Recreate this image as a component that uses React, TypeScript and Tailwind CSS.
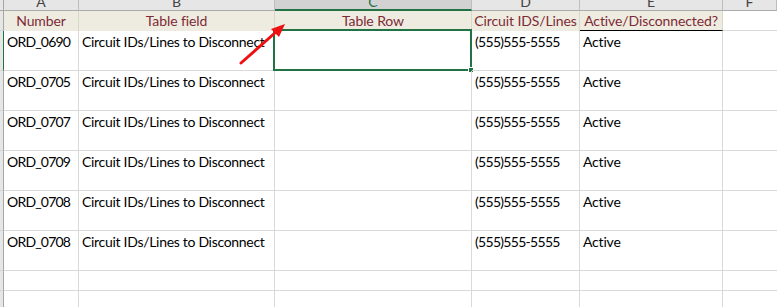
import React from "react";

const rows = [
  ["ORD_0690", "Circuit IDs/Lines to Disconnect", "", "(555)555-5555", "Active"],
  ["ORD_0705", "Circuit IDs/Lines to Disconnect", "", "(555)555-5555", "Active"],
  ["ORD_0707", "Circuit IDs/Lines to Disconnect", "", "(555)555-5555", "Active"],
  ["ORD_0709", "Circuit IDs/Lines to Disconnect", "", "(555)555-5555", "Active"],
  ["ORD_0708", "Circuit IDs/Lines to Disconnect", "", "(555)555-5555", "Active"],
  ["ORD_0708", "Circuit IDs/Lines to Disconnect", "", "(555)555-5555", "Active"],
];

const letters = ["A", "B", "C", "D", "E", "F"];
const heads = ["Number", "Table field", "Table Row", "Circuit IDS/Lines", "Active/Disconnected?"];
const cellText = [
  "block text-[14px] leading-[17px] tracking-[-0.8px]",
  "block text-[14px] leading-[17px] tracking-[-0.3px]",
  "block text-[14px] leading-[17px]",
  "block text-[14px] leading-[17px] tracking-[-0.7px]",
  "block text-[14px] leading-[17px] tracking-[-0.2px]",
];

export default function App() {
  return (
    <div
      className="relative w-[777px] h-[307px] overflow-hidden bg-white text-black"
      style={{ fontFamily: "Lato, 'Open Sans', sans-serif" }}
    >
      <div className="grid grid-cols-[4px_75px_196px_197px_108px_143px_1fr]">
        {/* column letters row */}
        <div className="h-[11px] bg-[#e6e6e6] border-r border-b border-[#a6a6a6]" />
        {letters.map((l) => (
          <div
            key={l}
            className={
              l === "C"
                ? "h-[11px] bg-[#d2d2d2] border-r border-[#bdbdbd] border-b-2 border-b-[#217346] flex items-end justify-center overflow-hidden"
                : "h-[11px] bg-[#e6e6e6] border-r border-b border-[#bdbdbd] border-b-[#ababab] flex items-end justify-center overflow-hidden"
            }
          >
            <span
              className={
                l === "C"
                  ? "text-[14px] leading-[14px] text-[#217346] translate-y-[0px]"
                  : "text-[14px] leading-[14px] text-[#444444] -translate-y-[1px]"
              }
            >
              {l}
            </span>
          </div>
        ))}

        {/* header row */}
        <div className="h-[20px] bg-[#e6e6e6] border-r border-b border-[#a6a6a6] border-b-[#d4d4d4]" />
        {heads.map((h, i) => (
          <div
            key={h}
            className={
              i === 4
                ? "h-[20px] bg-[#eeece1] border-r border-[#d9d7cb] border-b border-b-black flex items-center justify-center whitespace-nowrap overflow-hidden"
                : "h-[20px] bg-[#eeece1] border-r border-[#d9d7cb] flex items-center justify-center whitespace-nowrap overflow-hidden"
            }
          >
            <span className="text-[14px] leading-[20px] tracking-[-0.1px] text-[#7e2a35]">{h}</span>
          </div>
        ))}
        <div className="h-[20px] border-b border-[#d9d9d9]" />

        {/* data rows */}
        {rows.map((r, ri) => (
          <React.Fragment key={ri}>
            <div
              className={
                ri === 0
                  ? "h-[40px] bg-[#e6e6e6] border-r border-r-[#217346] border-b border-b-[#d4d4d4]"
                  : "h-[40px] bg-[#e6e6e6] border-r border-r-[#a6a6a6] border-b border-b-[#d4d4d4]"
              }
            />
            {r.map((c, ci) => (
              <div
                key={ci}
                className="relative h-[40px] border-r border-b border-[#d9d9d9] px-[3px] pt-[2px] whitespace-nowrap"
              >
                <span className={cellText[ci]}>{c}</span>
                {ri === 0 && ci === 2 && (
                  <div className="absolute left-[-2px] top-[-2px] right-[-1px] bottom-[-1px] border-2 border-[#217346]">
                    <div className="absolute right-[-4px] bottom-[-4px] w-[6px] h-[6px] bg-[#217346] border border-white" />
                  </div>
                )}
              </div>
            ))}
            <div className="h-[40px] border-b border-[#d9d9d9]" />
          </React.Fragment>
        ))}

        {[0, 1].map((k) => (
          <React.Fragment key={"e" + k}>
            <div className="h-[20px] bg-[#e6e6e6] border-r border-r-[#a6a6a6] border-b border-b-[#d4d4d4]" />
            {[0, 1, 2, 3, 4].map((ci) => (
              <div key={ci} className="h-[20px] border-r border-b border-[#d9d9d9]" />
            ))}
            <div className="h-[20px] border-b border-[#d9d9d9]" />
          </React.Fragment>
        ))}
      </div>

      {/* red arrow */}
      <svg className="absolute left-0 top-0 pointer-events-none" width="777" height="307">
        <line x1="241" y1="63" x2="276" y2="32" stroke="#ee1111" strokeWidth="3" strokeLinecap="round" />
        <polygon points="285,24 271,29 279,37" fill="#ee1111" />
      </svg>
    </div>
  );
}
